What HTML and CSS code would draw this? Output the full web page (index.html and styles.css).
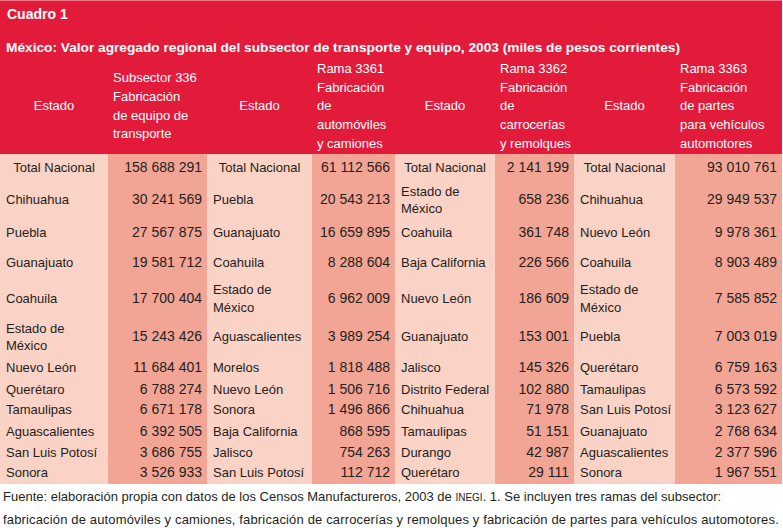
FILE: index.html
```html
<!DOCTYPE html>
<html lang="es">
<head>
<meta charset="utf-8">
<title>Cuadro 1</title>
<link rel="stylesheet" href="styles.css">
</head>
<body>
<div class="panel">
  <div class="head">
    <div class="label">Cuadro 1</div>
    <div class="title">México: Valor agregado regional del subsector de transporte y equipo, 2003 (miles de pesos corrientes)</div>
  </div>
  <table class="data">
    <colgroup>
      <col class="c1"><col class="c2"><col class="c3"><col class="c4"><col class="c5"><col class="c6"><col class="c7"><col class="c8">
    </colgroup>
    <thead>
      <tr>
        <th class="hstate">Estado</th>
        <th class="hval">Subsector 336<br>Fabricación<br>de equipo de<br>transporte</th>
        <th class="hstate">Estado</th>
        <th class="hval">Rama 3361<br>Fabricación<br>de<br>automóviles<br>y camiones</th>
        <th class="hstate">Estado</th>
        <th class="hval">Rama 3362<br>Fabricación<br>de<br>carrocerías<br>y remolques</th>
        <th class="hstate">Estado</th>
        <th class="hval">Rama 3363<br>Fabricación<br>de partes<br>para vehículos<br>automotores</th>
      </tr>
    </thead>
    <tbody>
      <tr class="r1">
        <td class="st total">Total Nacional</td><td class="num">158 688 291</td>
        <td class="st total">Total Nacional</td><td class="num">61 112 566</td>
        <td class="st total">Total Nacional</td><td class="num">2 141 199</td>
        <td class="st total">Total Nacional</td><td class="num">93 010 761</td>
      </tr>
      <tr class="r2">
        <td class="st">Chihuahua</td><td class="num">30 241 569</td>
        <td class="st">Puebla</td><td class="num">20 543 213</td>
        <td class="st">Estado de<br>México</td><td class="num">658 236</td>
        <td class="st">Chihuahua</td><td class="num">29 949 537</td>
      </tr>
      <tr class="r3">
        <td class="st">Puebla</td><td class="num">27 567 875</td>
        <td class="st">Guanajuato</td><td class="num">16 659 895</td>
        <td class="st">Coahuila</td><td class="num">361 748</td>
        <td class="st">Nuevo León</td><td class="num">9 978 361</td>
      </tr>
      <tr class="r4">
        <td class="st">Guanajuato</td><td class="num">19 581 712</td>
        <td class="st">Coahuila</td><td class="num">8 288 604</td>
        <td class="st">Baja California</td><td class="num">226 566</td>
        <td class="st">Coahuila</td><td class="num">8 903 489</td>
      </tr>
      <tr class="r5">
        <td class="st">Coahuila</td><td class="num">17 700 404</td>
        <td class="st">Estado de<br>México</td><td class="num">6 962 009</td>
        <td class="st">Nuevo León</td><td class="num">186 609</td>
        <td class="st">Estado de<br>México</td><td class="num">7 585 852</td>
      </tr>
      <tr class="r6">
        <td class="st">Estado de<br>México</td><td class="num">15 243 426</td>
        <td class="st">Aguascalientes</td><td class="num">3 989 254</td>
        <td class="st">Guanajuato</td><td class="num">153 001</td>
        <td class="st">Puebla</td><td class="num">7 003 019</td>
      </tr>
      <tr class="r7">
        <td class="st">Nuevo León</td><td class="num">11 684 401</td>
        <td class="st">Morelos</td><td class="num">1 818 488</td>
        <td class="st">Jalisco</td><td class="num">145 326</td>
        <td class="st">Querétaro</td><td class="num">6 759 163</td>
      </tr>
      <tr class="r8">
        <td class="st">Querétaro</td><td class="num">6 788 274</td>
        <td class="st">Nuevo León</td><td class="num">1 506 716</td>
        <td class="st">Distrito Federal</td><td class="num">102 880</td>
        <td class="st">Tamaulipas</td><td class="num">6 573 592</td>
      </tr>
      <tr class="r9">
        <td class="st">Tamaulipas</td><td class="num">6 671 178</td>
        <td class="st">Sonora</td><td class="num">1 496 866</td>
        <td class="st">Chihuahua</td><td class="num">71 978</td>
        <td class="st">San Luis Potosí</td><td class="num">3 123 627</td>
      </tr>
      <tr class="r10">
        <td class="st">Aguascalientes</td><td class="num">6 392 505</td>
        <td class="st">Baja California</td><td class="num">868 595</td>
        <td class="st">Tamaulipas</td><td class="num">51 151</td>
        <td class="st">Guanajuato</td><td class="num">2 768 634</td>
      </tr>
      <tr class="r11">
        <td class="st">San Luis Potosí</td><td class="num">3 686 755</td>
        <td class="st">Jalisco</td><td class="num">754 263</td>
        <td class="st">Durango</td><td class="num">42 987</td>
        <td class="st">Aguascalientes</td><td class="num">2 377 596</td>
      </tr>
      <tr class="r12">
        <td class="st">Sonora</td><td class="num">3 526 933</td>
        <td class="st">San Luis Potosí</td><td class="num">112 712</td>
        <td class="st">Querétaro</td><td class="num">29 111</td>
        <td class="st">Sonora</td><td class="num">1 967 551</td>
      </tr>
    </tbody>
  </table>
  <p class="note">Fuente: elaboración propia con datos de los Censos Manufactureros, 2003 de <span class="sc">INEGI</span>. 1. Se incluyen tres ramas del subsector:<br><span class="wide">fabricación de automóviles y camiones, fabricación de carrocerías y remolques y fabricación de partes para vehículos automotores.</span></p>
</div>
</body>
</html>
```

FILE: styles.css
```css
html, body {
  margin: 0;
  padding: 0;
  background: #ffffff;
}

body {
  font-family: "Liberation Sans", Arial, sans-serif;
  color: #231f20;
}

.panel {
  width: 782px;
}

.head {
  background: #e31b3b;
  border-top: 1px solid #ef7585;
  color: #ffffff;
  padding: 4px 0 0 6px;
  height: 55px;
}

.label {
  font-weight: bold;
  font-size: 14px;
  line-height: 18px;
  padding-left: 1px;
}

.title {
  font-weight: bold;
  font-size: 13.7px;
  line-height: 18px;
  margin-top: 16px;
  white-space: nowrap;
}

.data {
  border-collapse: collapse;
  table-layout: fixed;
  width: 782px;
  font-size: 13px;
}

.c1 { width: 108px; }
.c2 { width: 99px; }
.c3 { width: 105px; }
.c4 { width: 83px; }
.c5 { width: 100px; }
.c6 { width: 79px; }
.c7 { width: 101px; }
.c8 { width: 107px; }

.data thead th {
  background: #e31b3b;
  color: #ffffff;
  font-weight: normal;
  font-size: 13px;
  line-height: 18.7px;
  height: 93px;
  padding: 0;
  vertical-align: middle;
}

.hstate {
  text-align: center;
}

.hval {
  text-align: left;
  padding-left: 5px !important;
  white-space: nowrap;
}

.data td {
  padding: 0;
  line-height: 17.5px;
  vertical-align: middle;
  white-space: nowrap;
}

.st {
  background: #fbd2c6;
  padding-left: 6px !important;
  text-align: left;
}

.st.total {
  text-align: center;
  padding-left: 0 !important;
}

.num {
  background: #f3a595;
  text-align: right;
  padding-right: 5px !important;
  font-size: 14px;
}

.r1 { height: 29px; }
.r2 { height: 31px; }
.r3 { height: 30px; }
.r4 { height: 31px; }
.r5 { height: 40px; }
.r6 { height: 37px; }
.r7 { height: 24px; }
.r8 { height: 20px; }
.r9 { height: 21px; }
.r10 { height: 22px; }
.r11 { height: 20px; }
.r12 { height: 21px; }

.note {
  margin: 2px 0 0 0;
  padding-left: 3px;
  font-size: 13px;
  line-height: 22px;
  color: #231f20;
  white-space: nowrap;
}

.wide {
  letter-spacing: 0.15px;
}

.sc {
  font-size: 10px;
}
```
